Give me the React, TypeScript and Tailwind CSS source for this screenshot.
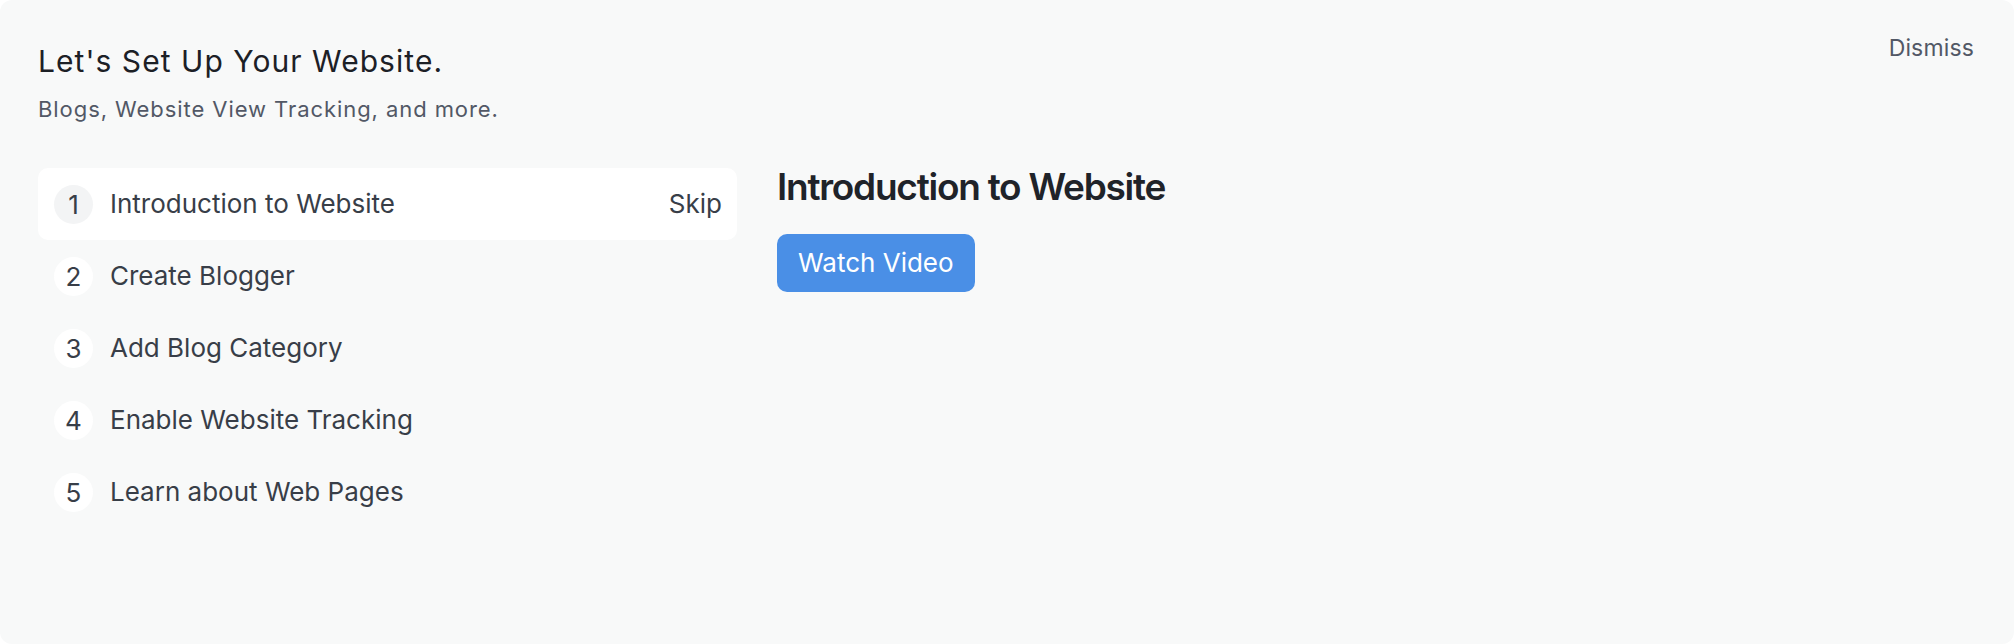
import React from "react";

const steps = [
  "Introduction to Website",
  "Create Blogger",
  "Add Blog Category",
  "Enable Website Tracking",
  "Learn about Web Pages",
];

export default function App() {
  return (
    <div
      className="w-[2014px] h-[644px] bg-white"
      style={{ fontFamily: "Inter, 'Noto Sans', sans-serif" }}
    >
      <div className="w-full h-full rounded-xl bg-[#f8f9f9] pl-[38px] pr-[40px] pt-[34px] flex flex-col">
        <div className="flex justify-between items-start">
          <div className="flex flex-col pt-[9px]">
            <h1 className="text-[30px] leading-[36px] tracking-[1.05px] text-[#1c2026] font-normal">
              Let's Set Up Your Website.
            </h1>
            <p className="mt-[16px] text-[22px] leading-[28px] tracking-[0.93px] text-[#525866]">
              Blogs, Website View Tracking, and more.
            </p>
          </div>
          <button className="text-[23px] leading-[28px] tracking-[0.15px] text-[#525866]">Dismiss</button>
        </div>

        <div className="flex items-start mt-[45px] gap-[40px]">
          <div className="w-[699px] flex flex-col">
            {steps.map((s, i) => {
              const active = i === 0;
              return (
                <div
                  key={s}
                  className={
                    "h-[72px] flex items-center pl-[16px] pr-[15px] rounded-[10px] " +
                    (active ? "bg-white" : "")
                  }
                >
                  <div
                    className={
                      "w-[39px] h-[39px] rounded-full flex items-center justify-center text-[26px] text-[#383e48] " +
                      (active ? "bg-[#f3f4f5]" : "bg-white")
                    }
                  >
                    {i + 1}
                  </div>
                  <span className="ml-[17px] text-[26px] leading-[32px] text-[#383e48]">{s}</span>
                  {active && (
                    <span className="ml-auto text-[26px] leading-[32px] text-[#383e48]">Skip</span>
                  )}
                </div>
              );
            })}
          </div>

          <div className="flex flex-col items-start">
            <h2 className="text-[37px] leading-[38px] tracking-[-1.25px] font-semibold text-[#1f2329]">
              Introduction to Website
            </h2>
            <button className="mt-[28px] h-[58px] px-[21px] rounded-[10px] bg-[#4a8fe6] text-white text-[26px] leading-[32px]">
              Watch Video
            </button>
          </div>
        </div>
      </div>
    </div>
  );
}
